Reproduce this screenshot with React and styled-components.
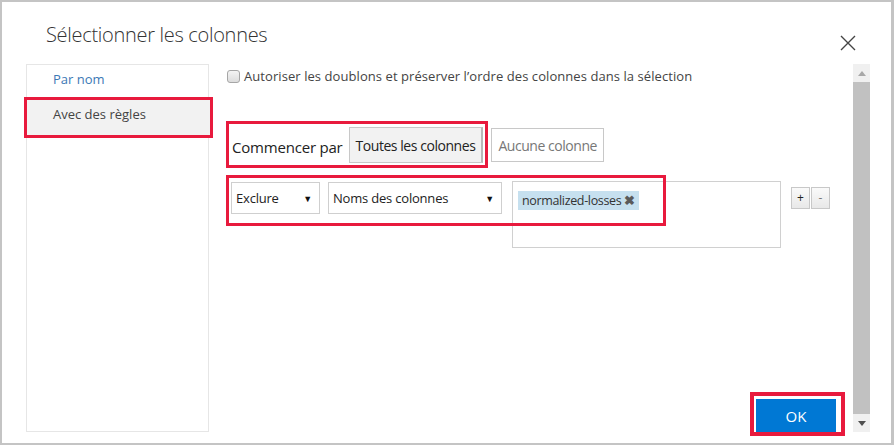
import React from "react";
import styled, { createGlobalStyle } from "styled-components";

const Global = createGlobalStyle`
  html, body { margin: 0; padding: 0; background: #ffffff; }
  body { font-family: "Open Sans", "Noto Sans", sans-serif; }
  * { box-sizing: border-box; }
`;

const RED = "#e81a3d";

const Frame = styled.div`
  width: 894px;
  height: 445px;
  border: 2px solid #c4c4c4;
  border-right-width: 3px;
  background: #fff;
  display: flex;
  flex-direction: column;
  overflow: hidden;
`;

const Header = styled.div`
  height: 62px;
  flex: none;
  display: flex;
  justify-content: space-between;
  align-items: flex-start;
  padding: 19px 35px 0 44px;
`;

const Title = styled.h1`
  margin: 0;
  font-family: "Open Sans", sans-serif;
  font-weight: 300;
  font-size: 20px;
  line-height: 27px;
  color: #333;
  letter-spacing: -0.3px;
`;

const Close = styled.button`
  margin-top: 14px;
  width: 16px;
  height: 16px;
  padding: 0;
  border: 0;
  background: none;
  display: flex;
`;

const Body = styled.div`
  flex: 1;
  display: flex;
  align-items: flex-start;
  padding-left: 24px;
`;

const Nav = styled.nav`
  width: 183px;
  height: 368px;
  flex: none;
  border: 1px solid #e6e6e6;
  display: flex;
  flex-direction: column;
`;

const NavItem = styled.div`
  height: 35px;
  padding: 6px 0 0 26px;
  font-size: 13px;
  line-height: 17px;
  color: ${(p) => (p.$active ? "#444" : "#3c78b5")};
  background: ${(p) => (p.$active ? "#f2f2f2" : "transparent")};
  outline: ${(p) => (p.$active ? `3px solid ${RED}` : "none")};
  margin-right: ${(p) => (p.$active ? "-2px" : "0")};
`;

const Main = styled.div`
  flex: 1;
  display: flex;
  align-items: flex-start;
  padding-right: 21px;
`;

const Content = styled.div`
  flex: 1;
  height: 372px;
  display: flex;
  flex-direction: column;
  padding: 3px 8px 0 18px;
`;

const CheckRow = styled.label`
  display: flex;
  align-items: center;
  gap: 4px;
  font-size: 13px;
  line-height: 18px;
  letter-spacing: 0.07px;
  color: #444;
`;

const CheckBox = styled.span`
  width: 13px;
  height: 13px;
  border: 1px solid #a6a6a6;
  border-radius: 3px;
  background: linear-gradient(#f4f4f4, #dcdcdc);
  flex: none;
`;

const StartRow = styled.div`
  margin-top: 36px;
  display: flex;
  align-items: flex-start;
`;

const StartBox = styled.div`
  margin-left: -1px;
  border: 3px solid ${RED};
  padding: 3px 2px 2px 3px;
  display: flex;
  align-items: center;
  gap: 6px;
`;

const StartLabel = styled.span`
  font-size: 15px;
  color: #222;
  padding-top: 4px;
  letter-spacing: -0.2px;
`;

const Toggle = styled.button`
  height: ${(p) => (p.$on ? "36px" : "34px")};
  margin: ${(p) => (p.$on ? "0" : "7px 0 0 3px")};
  padding: 0 6px;
  font-family: "Open Sans", sans-serif;
  font-size: 14px;
  letter-spacing: -0.45px;
  color: ${(p) => (p.$on ? "#222" : "#777")};
  background: ${(p) => (p.$on ? "#f2f2f2" : "#fff")};
  border: 1px solid #c8c8c8;
  border-right: ${(p) => (p.$on ? "2px solid #b8b8b8" : "1px solid #c8c8c8")};
`;

const RuleRow = styled.div`
  position: relative;
  margin-top: 13px;
  display: flex;
  align-items: flex-start;
  padding-left: 4px;
`;

const Highlight = styled.div`
  position: absolute;
  border: 3px solid ${RED};
  pointer-events: none;
`;

const Select = styled.div`
  width: ${(p) => p.$w}px;
  height: 32px;
  margin: 1px ${(p) => p.$gap}px 0 0;
  border: 1px solid #cfcfcf;
  background: #fff;
  display: flex;
  align-items: center;
  justify-content: space-between;
  padding: 0 7px 0 4px;
  font-size: 13px;
  color: #222;
  letter-spacing: -0.2px;
`;

const Caret = styled.span`
  font-size: 9px;
  color: #111;
`;

const TagBox = styled.div`
  width: 269px;
  height: 67px;
  border: 1px solid #d0d0d0;
  padding: 9px 0 0 5px;
  display: flex;
  align-items: flex-start;
`;

const Tag = styled.span`
  display: inline-flex;
  align-items: center;
  gap: 3px;
  height: 19px;
  padding: 0 4px 0 4px;
  background: #c6e0ef;
  font-size: 12.5px;
  color: #333;
  letter-spacing: -0.35px;
`;

const TagX = styled.span`
  font-size: 12.5px;
  font-weight: 700;
  color: #5a5a5a;
`;

const PlusMinus = styled.div`
  margin: 6px 0 0 10px;
  display: flex;
  gap: 1px;
`;

const Mini = styled.button`
  width: 19px;
  height: 22px;
  padding: 0;
  border: 1px solid #c8c8c8;
  background: linear-gradient(#fafafa, #e8e8e8);
  font-family: "Open Sans", sans-serif;
  font-size: 12px;
  line-height: 18px;
  color: ${(p) => (p.$dim ? "#777" : "#222")};
`;

const Footer = styled.div`
  margin-top: auto;
  display: flex;
  justify-content: flex-end;
`;

const OkBox = styled.div`
  border: 4px solid ${RED};
  padding: 3px 5px 0 2px;
`;

const OkButton = styled.button`
  width: 80px;
  height: 33px;
  border: 0;
  background: #0078d4;
  color: #fff;
  font-family: "Open Sans", sans-serif;
  font-size: 15px;
`;

const Scrollbar = styled.div`
  width: 17px;
  height: 368px;
  flex: none;
  background: #f0f0f0;
  display: flex;
  flex-direction: column;
`;

const ScrollBtn = styled.div`
  height: 18px;
  flex: none;
  display: flex;
  align-items: center;
  justify-content: center;
`;

const Thumb = styled.div`
  flex: 1;
  background: #c1c1c1;
`;

export default function App() {
  return (
    <>
      <Global />
      <Frame>
        <Header>
          <Title>Sélectionner les colonnes</Title>
          <Close aria-label="Fermer">
            <svg width="16" height="16" viewBox="0 0 16 16">
              <path d="M1 1 L15 15 M15 1 L1 15" stroke="#444" strokeWidth="1.4" fill="none" />
            </svg>
          </Close>
        </Header>
        <Body>
          <Nav>
            <NavItem>Par nom</NavItem>
            <NavItem $active>Avec des règles</NavItem>
          </Nav>
          <Main>
            <Content>
              <CheckRow>
                <CheckBox />
                Autoriser les doublons et préserver l’ordre des colonnes dans la sélection
              </CheckRow>
              <StartRow>
                <StartBox>
                  <StartLabel>Commencer par</StartLabel>
                  <Toggle $on>Toutes les colonnes</Toggle>
                </StartBox>
                <Toggle>Aucune colonne</Toggle>
              </StartRow>
              <RuleRow>
                <Select $w={89} $gap={8}>
                  Exclure <Caret>▼</Caret>
                </Select>
                <Select $w={174} $gap={10}>
                  Noms des colonnes <Caret>▼</Caret>
                </Select>
                <TagBox>
                  <Tag>
                    normalized-losses <TagX>✖</TagX>
                  </Tag>
                </TagBox>
                <PlusMinus>
                  <Mini>+</Mini>
                  <Mini $dim>-</Mini>
                </PlusMinus>
                <Highlight style={{ left: -1, top: -6, width: 440, height: 51 }} />
              </RuleRow>
              <Footer>
                <OkBox>
                  <OkButton>OK</OkButton>
                </OkBox>
              </Footer>
            </Content>
            <Scrollbar>
              <ScrollBtn>
                <svg width="8" height="5" viewBox="0 0 8 5">
                  <path d="M0 5 L4 0 L8 5 Z" fill="#a8a8a8" />
                </svg>
              </ScrollBtn>
              <Thumb />
              <ScrollBtn>
                <svg width="8" height="5" viewBox="0 0 8 5">
                  <path d="M0 0 L8 0 L4 5 Z" fill="#505050" />
                </svg>
              </ScrollBtn>
            </Scrollbar>
          </Main>
        </Body>
      </Frame>
    </>
  );
}
